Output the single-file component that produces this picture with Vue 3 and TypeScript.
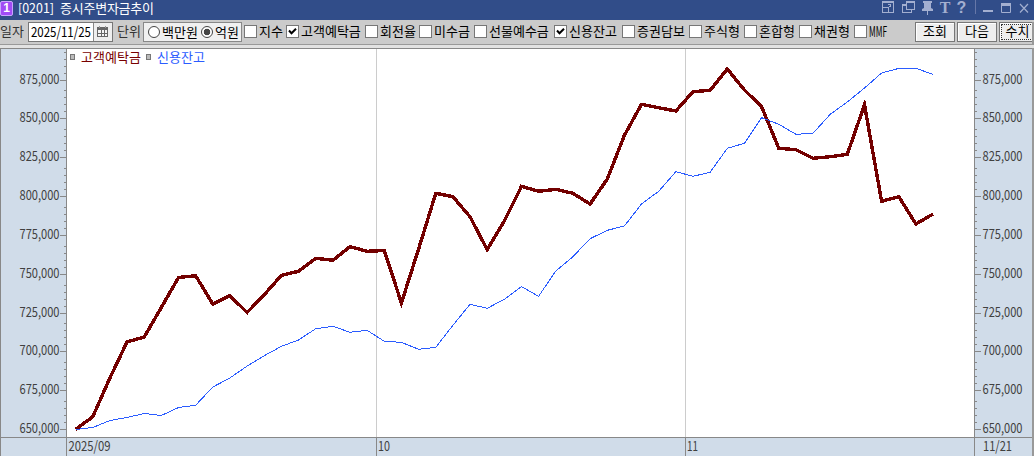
<script setup lang="ts">
const checks = [
  { label: '지수', on: false },
  { label: '고객예탁금', on: true },
  { label: '회전율', on: false },
  { label: '미수금', on: false },
  { label: '선물예수금', on: false },
  { label: '신용잔고', on: true },
  { label: '증권담보', on: false },
  { label: '주식형', on: false },
  { label: '혼합형', on: false },
  { label: '채권형', on: false },
]

const majors = [80, 118, 157, 196, 235, 274, 313, 351, 390, 429].map((y, i) => ({
  y,
  label: `${875 - i * 25},000`,
}))
const minors = majors.flatMap(m => [7, 14, 21, 28].map(d => m.y - d)).filter(y => y > 49)

const deposits = [
  429.5, 416.7, 378, 342, 337, 307.5, 277.5, 275.7, 304, 295.7, 312.5, 294.7, 275.3, 271.3, 258.3, 260.3, 246.7,
  251.3, 250.5, 303, 249, 193.3, 196.7, 216.7, 249.7, 221, 186.3, 191.3, 189.3, 193.3, 204, 179, 135.3, 104.3,
  107.7, 111, 91.7, 90.3, 69, 90, 106.7, 148.3, 149.7, 158.3, 156.7, 154.3, 104.8, 201.3, 196.7, 224, 214,
]
const credit = [
  429.5, 427.5, 420.5, 417.5, 413.5, 415.5, 407.5, 405.3, 387, 378, 366, 355.7, 346.3, 340, 328.7, 326.3, 332.3,
  330.3, 341.3, 342.3, 349.3, 347.3, 325.3, 304.3, 308.3, 299.3, 286.6, 296.3, 271, 256.7, 238.7, 230.3, 226, 204,
  191.3, 171.7, 176.3, 172.3, 148.3, 143.3, 117.7, 124.3, 134.3, 133.3, 114.3, 102, 88, 73, 68.4, 68.4, 74.3,
]
const toPoints = (ys: number[]): string =>
  ys.map((y, i) => `${(75.6 + i * 17.15).toFixed(1)},${(y - 48).toFixed(1)}`).join(' ')
</script>

<template>
  <div class="window">
    <header class="titlebar">
      <span class="badge">1</span>
      <svg class="title" width="140" height="20">
        <text x="0" y="12.5" textLength="36" lengthAdjust="spacingAndGlyphs">[0201]</text>
        <text x="42" y="12.5" textLength="94">증시주변자금추이</text>
      </svg>
      <svg class="winicons" width="160" height="20" viewBox="874 0 160 20">
        <g fill="none" stroke="#a3afd0" stroke-width="1" shape-rendering="crispEdges">
          <path d="M882.5 1V13M893.5 1V13M882 1.5h12M882 2.5h12M882 12.5h12M882 7.5h6.5v5M890 4.5h-2M890.5 4v3M888.5 6.5h1" />
          <path d="M906.5 1.5h8v8h-8zM906 2.5h9M906 4.5h-4v8h9v-3M902 5.5h4" />
        </g>
        <path d="M923 1h9v2h-1v5l2 1v2h-5v4h-1v-4h-5V9l2-1V3h-1z" fill="#a3afd0" />
        <text x="939.7" y="12.5" class="tee">T</text>
        <text x="956.5" y="12.5" class="question">?</text>
        <path d="M975.5 0v14" stroke="#6677a8" />
        <path d="M983 11h10" stroke="#a3afd0" stroke-width="2" />
        <path d="M1001.5 4v8.5h9V4M1001 4.5h10" fill="none" stroke="#a3afd0" />
        <path d="M1001 3h10v3h-10z" fill="#a3afd0" />
        <path d="M1020 4l8 8.5M1028 4l-8 8.5" stroke="#a3afd0" stroke-width="1.2" />
      </svg>
    </header>

    <div class="toolbar">
      <span class="caption date-caption">일자</span>
      <div class="date">
        <svg class="narrow" width="64" height="18"><text x="2" y="14" textLength="60" lengthAdjust="spacingAndGlyphs">2025/11/25</text></svg>
        <span class="calendar">
          <svg width="17" height="18" shape-rendering="crispEdges">
            <path d="M3 4h11v10H3z" fill="#666" />
            <path d="M4 7h3v3H4zM8 7h2v3H8zM11 7h2v3h-2zM4 11h3v2H4zM8 11h2v2H8zM11 11h2v2h-2z" fill="#f4f4f4" />
            <path d="M5 3h1v2H5zM11 3h1v2h-1z" fill="#999" />
          </svg>
        </span>
      </div>
      <span class="caption unit-caption">단위</span>
      <div class="radios">
        <i class="radio"></i><span class="million">백만원</span>
        <i class="radio on"></i><span>억원</span>
      </div>
      <div class="checks">
        <label v-for="c in checks" :key="c.label" class="check">
          <i class="box"><svg v-if="c.on" width="9" height="9"><path d="M1 3.5L3.5 6.2L8 1.7" /></svg></i>
          <span>{{ c.label }}</span>
        </label>
        <label class="check">
          <i class="box"></i>
          <svg class="narrow" width="20" height="18"><text x="0" y="14.5" textLength="18" lengthAdjust="spacingAndGlyphs">MMF</text></svg>
        </label>
      </div>
      <div class="buttons">
        <button>조회</button>
        <button>다음</button>
        <button class="focused">수치</button>
      </div>
    </div>

    <div class="divider"></div>

    <svg class="chart" width="1034" height="408">
      <rect width="1034" height="408" fill="#d0dce9" />
      <rect x="67" y="1" width="907" height="388" fill="#fff" />
      <g shape-rendering="crispEdges">
        <path d="M376.5 1v388M685.5 1v388" stroke="#ccc" />
        <path
          d="M0 .5h1034M.5 0v408M66.5 0v408M974.5 0v408M0 389.5h1034M376.5 390v18M685.5 390v18"
          stroke="#888"
          fill="none"
        />
        <path v-for="m in majors" :key="m.y" :d="`M60 ${m.y - 47.5}h6M975 ${m.y - 47.5}h6`" stroke="#888" />
        <path v-for="y in minors" :key="y" :d="`M64 ${y - 47.5}h2M975 ${y - 47.5}h2`" stroke="#888" />
        <polyline :points="toPoints(deposits)" class="deposits" />
        <polyline :points="toPoints(credit)" class="credit" />
      </g>
      <g class="axis">
        <template v-for="m in majors" :key="m.label">
          <text x="19.5" :y="m.y - 44" textLength="40" lengthAdjust="spacingAndGlyphs">{{ m.label }}</text>
          <text x="982.5" :y="m.y - 44" textLength="40" lengthAdjust="spacingAndGlyphs">{{ m.label }}</text>
        </template>
        <text x="68.5" y="403" textLength="42" lengthAdjust="spacingAndGlyphs">2025/09</text>
        <text x="378" y="403" textLength="12" lengthAdjust="spacingAndGlyphs">10</text>
        <text x="687" y="403" textLength="11" lengthAdjust="spacingAndGlyphs">11</text>
        <text x="983" y="403" textLength="29" lengthAdjust="spacingAndGlyphs">11/21</text>
      </g>
      <g fill="#bbb" stroke="#777">
        <rect x="70.5" y="6.5" width="4" height="5" />
        <rect x="146.5" y="6.5" width="4" height="5" />
      </g>
      <text x="81" y="14" textLength="60" fill="#780000">고객예탁금</text>
      <text x="157" y="14" textLength="48" fill="#2b5cff">신용잔고</text>
      <rect x="1032" width="2" height="408" fill="#999" />
    </svg>
  </div>
</template>

<style>
body {
  overflow: hidden;
}
</style>

<style scoped>
.window {
  width: 1034px;
  height: 456px;
  overflow: hidden;
  background: #cbcbcb;
  font: 13px/18px 'Noto Sans CJK KR', sans-serif;
  color: #000;
}
svg {
  display: block;
  flex: none;
  overflow: visible;
}
.titlebar {
  display: flex;
  height: 20px;
  background: #314d89;
}
.badge {
  width: 13px;
  height: 15px;
  margin: 1px 5px 0 0;
  box-sizing: border-box;
  border: 1px solid #c9a4ff;
  border-radius: 2px;
  background: #a14bf5;
  color: #fff;
  font: bold 12px/13px 'Liberation Sans', sans-serif;
  text-align: center;
}
.title {
  fill: #fff;
}
.winicons {
  margin-left: auto;
}
.tee {
  font: bold 16px 'Liberation Serif', serif;
  fill: #a3afd0;
}
.question {
  font: bold 16px 'Liberation Sans', sans-serif;
  fill: #a3afd0;
}
.toolbar {
  display: flex;
  height: 24px;
  padding-top: 2px;
  box-sizing: border-box;
  white-space: nowrap;
}
.narrow {
  font-size: 14px;
}
.caption {
  color: #333;
}
.date-caption {
  width: 28px;
}
.date {
  display: flex;
  width: 85px;
  height: 20px;
  box-sizing: border-box;
  border: 1px solid #777;
  background: #fff;
}
.calendar {
  flex: 1;
  border-left: 1px solid #888;
  background: #eee;
}
.unit-caption {
  width: 26px;
  padding-left: 4px;
}
.radios {
  display: flex;
  align-items: center;
  width: 99px;
  height: 20px;
  padding-left: 4px;
  box-sizing: border-box;
  border: 1px solid #888;
  background: #f0f0f0;
}
.radio {
  width: 12px;
  height: 12px;
  margin-right: 2px;
  box-sizing: border-box;
  border: 1px solid #444;
  border-radius: 50%;
  background: #fff;
}
.radio.on {
  background: radial-gradient(circle, #444 0 3px, #fff 3.6px);
}
.million {
  width: 39px;
}
.checks {
  display: grid;
  grid-template-columns: 42px 79px 54px 55px 80px 68px 67px 55px 55px 55px 40px;
  margin-left: 2px;
}
.check {
  display: flex;
  gap: 2px;
}
.box {
  width: 13px;
  height: 13px;
  margin-top: 3px;
  padding: 1px;
  box-sizing: border-box;
  border: 1px solid #777;
  background: #fff;
  flex: none;
}
.box path {
  fill: none;
  stroke: #000;
  stroke-width: 2;
}
.buttons {
  display: flex;
  gap: 2px;
  margin-left: auto;
  width: 117px;
  overflow: hidden;
  border-right: 2px solid #999;
}
button {
  flex: none;
  width: 40px;
  height: 20px;
  padding: 0 0 2px;
  border: 1px solid #777;
  background: #eee;
  box-shadow: inset 1px 1px #fff;
  font: inherit;
  line-height: 16px;
  color: #000;
}
.focused {
  width: 38px;
  padding-right: 1px;
  outline: 1px dotted #333;
  outline-offset: -3px;
}
.divider {
  height: 4px;
  box-sizing: border-box;
  border-top: 1px solid #999;
  background: #e2e2e2;
}
.deposits {
  fill: none;
  stroke: #730000;
  stroke-width: 3.4;
}
.credit {
  fill: none;
  stroke: #2b5cff;
  stroke-width: 1;
}
.axis {
  font: 14px 'Noto Sans CJK KR', sans-serif;
  fill: #404040;
}
</style>
